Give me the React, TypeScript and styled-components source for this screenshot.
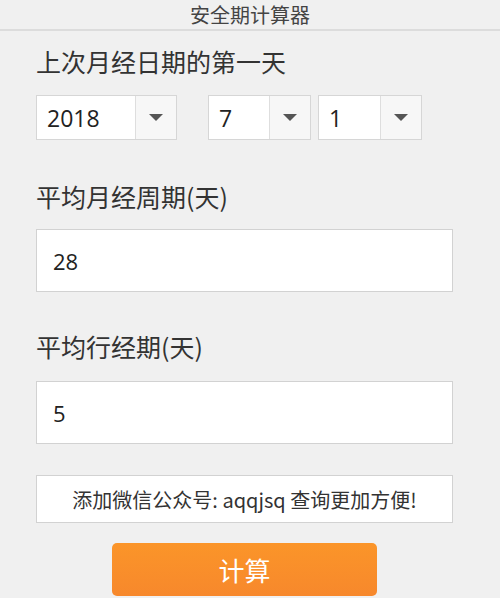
import styled, { createGlobalStyle } from 'styled-components';

const GlobalStyle = createGlobalStyle`
    html, body {
        margin: 0;
        padding: 0;
        background: #f0f0f0;
    }
    body {
        font-family: "Noto Sans CJK SC", "Open Sans", sans-serif;
        color: #333;
    }
`;

export default function App() {
    return (
        <>
            <GlobalStyle />
            <Page>
                <Header>安全期计算器</Header>
                <Content>
                    <Label>上次月经日期的第一天</Label>
                    <SelectRow>
                        <Select $width={141} $textWidth={99}>
                            <SelectValue>2018</SelectValue>
                            <SelectArrow><Caret /></SelectArrow>
                        </Select>
                        <Select $width={103} $textWidth={61} $gap={31}>
                            <SelectValue>7</SelectValue>
                            <SelectArrow><Caret /></SelectArrow>
                        </Select>
                        <Select $width={104} $textWidth={62} $gap={7}>
                            <SelectValue>1</SelectValue>
                            <SelectArrow><Caret /></SelectArrow>
                        </Select>
                    </SelectRow>

                    <Label $top={41}>平均月经周期(天)</Label>
                    <Field>28</Field>

                    <Label $top={39}>平均行经期(天)</Label>
                    <Field $top={20}>5</Field>

                    <Notice>添加微信公众号: aqqjsq 查询更加方便!</Notice>
                    <ButtonRow>
                        <CalcButton>计算</CalcButton>
                    </ButtonRow>
                </Content>
            </Page>
        </>
    );
}

const Page = styled.div`
    width: 500px;
    height: 598px;
    overflow: hidden;
    background: #f0f0f0;
`;

const Header = styled.div`
    height: 29px;
    line-height: 29px;
    text-align: center;
    font-size: 20px;
    color: #444;
    border-bottom: 2px solid #dcdcdc;
`;

const Content = styled.div`
    padding: 0 47px 0 36px;
    display: flex;
    flex-direction: column;
`;

const Label = styled.div<{ $top?: number }>`
    margin-top: ${(p) => p.$top ?? 15}px;
    font-size: 25px;
    line-height: 30px;
    color: #333;
`;

const SelectRow = styled.div`
    margin-top: 19px;
    display: flex;
`;

const Select = styled.div<{ $width: number; $textWidth: number; $gap?: number }>`
    width: ${(p) => p.$width}px;
    height: 45px;
    margin-left: ${(p) => p.$gap ?? 0}px;
    box-sizing: border-box;
    border: 1px solid #d6d6d6;
    background: #fff;
    display: grid;
    grid-template-columns: ${(p) => p.$textWidth - 1}px 1fr;
`;

const SelectValue = styled.div`
    display: flex;
    align-items: center;
    padding-left: 10px;
    font-family: "Open Sans", "Noto Sans CJK SC", sans-serif;
    font-size: 23px;
    color: #222;
`;

const SelectArrow = styled.div`
    border-left: 1px solid #dedede;
    background: #f7f7f7;
    display: flex;
    align-items: center;
    justify-content: center;
`;

const Caret = styled.span`
    width: 0;
    height: 0;
    border-left: 7px solid transparent;
    border-right: 7px solid transparent;
    border-top: 7px solid #555;
`;

const Field = styled.div<{ $top?: number }>`
    margin-top: ${(p) => p.$top ?? 18}px;
    height: 63px;
    box-sizing: border-box;
    border: 1px solid #d2d2d2;
    background: #fff;
    display: flex;
    align-items: center;
    padding-left: 16px;
    font-family: "Open Sans", "Noto Sans CJK SC", sans-serif;
    font-size: 22px;
    color: #222;
`;

const Notice = styled.div`
    margin-top: 31px;
    height: 48px;
    box-sizing: border-box;
    border: 1px solid #d2d2d2;
    background: #fff;
    display: flex;
    align-items: center;
    justify-content: center;
    font-size: 20px;
    color: #333;
`;

const ButtonRow = styled.div`
    margin-top: 20px;
    padding-left: 76px;
    display: flex;
`;

const CalcButton = styled.button`
    width: 265px;
    height: 53px;
    border: none;
    border-radius: 5px;
    background: linear-gradient(#fb9529, #f7882c);
    color: #fff;
    font-family: "Noto Sans CJK SC", sans-serif;
    font-size: 26px;
    padding: 0;
    cursor: pointer;
`;
